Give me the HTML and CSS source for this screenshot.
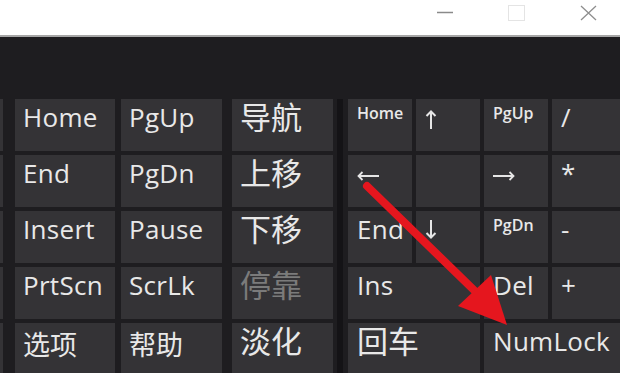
FILE: index.html
```html
<!DOCTYPE html>
<html lang="zh-CN">
<head>
<meta charset="utf-8">
<title>屏幕键盘</title>
<link rel="stylesheet" href="styles.css">
</head>
<body>
<div class="titlebar">
  <svg class="ctl" width="16" height="16" viewBox="0 0 16 16"><line x1="0" y1="7.5" x2="16" y2="7.5" stroke="#8a8a8a" stroke-width="1.5"/></svg>
  <svg class="ctl" width="17" height="16" viewBox="0 0 17 16"><rect x="0.5" y="0.5" width="16" height="15" fill="none" stroke="#e4e4e4" stroke-width="1"/></svg>
  <svg class="ctl" width="17" height="16" viewBox="0 0 17 16"><path d="M1 1 L16 15 M16 1 L1 15" stroke="#8e8e8e" stroke-width="1.3" fill="none"/></svg>
</div>
<div class="board">
  <div class="stub">
    <div class="key"></div><div class="key"></div><div class="key"></div><div class="key"></div><div class="key"></div>
  </div>
  <div class="lgrid">
    <div class="key">Home</div>
    <div class="key">PgUp</div>
    <div class="key c3 cjk">导航</div>
    <div class="key">End</div>
    <div class="key">PgDn</div>
    <div class="key c3 cjk">上移</div>
    <div class="key">Insert</div>
    <div class="key">Pause</div>
    <div class="key c3 cjk">下移</div>
    <div class="key">PrtScn</div>
    <div class="key">ScrLk</div>
    <div class="key c3 cjk off">停靠</div>
    <div class="key cjk-sm">选项</div>
    <div class="key cjk-sm">帮助</div>
    <div class="key c3 cjk">淡化</div>
  </div>
  <div class="sep"></div>
  <div class="rgrid">
    <div class="key sm">Home</div>
    <div class="key"><svg class="ic up" width="12" height="19" viewBox="0 0 12 19"><path d="M6 1.5 V19 M1.5 6 L6 1.5 L10.5 6" stroke="#e6e6e6" stroke-width="2" fill="none"/></svg></div>
    <div class="key sm">PgUp</div>
    <div class="key">/</div>
    <div class="key"><svg class="ic lr" width="22" height="10" viewBox="0 0 22 10"><path d="M1.5 5 H22 M5.5 1 L1.5 5 L5.5 9" stroke="#e6e6e6" stroke-width="1.8" fill="none"/></svg></div>
    <div class="key"></div>
    <div class="key"><svg class="ic lr" width="22" height="10" viewBox="0 0 22 10"><path d="M0 5 H20.5 M16.5 1 L20.5 5 L16.5 9" stroke="#e6e6e6" stroke-width="1.8" fill="none"/></svg></div>
    <div class="key">*</div>
    <div class="key">End</div>
    <div class="key"><svg class="ic down" width="12" height="19" viewBox="0 0 12 19"><path d="M6 0 V17.5 M1.5 13 L6 17.5 L10.5 13" stroke="#e6e6e6" stroke-width="2" fill="none"/></svg></div>
    <div class="key sm">PgDn</div>
    <div class="key">-</div>
    <div class="key span2">Ins</div>
    <div class="key">Del</div>
    <div class="key">+</div>
    <div class="key span2 cjk">回车</div>
    <div class="key span2">NumLock</div>
  </div>
</div>
<svg class="pointer" width="620" height="373" viewBox="0 0 620 373">
  <line x1="367" y1="186" x2="479" y2="295" stroke="#e5161e" stroke-width="8" stroke-linecap="round"/>
  <polygon points="507,325 458,306 491,275" fill="#e5161e"/>
</svg>
</body>
</html>
```

FILE: styles.css
```css
body {
  margin: 0;
  width: 620px;
  height: 373px;
  overflow: hidden;
  position: relative;
  background: #1e1d20;
  font-family: "Open Sans", "Noto Sans CJK SC", sans-serif;
}

.titlebar {
  height: 37px;
  box-sizing: border-box;
  background: #ffffff;
  border-bottom: 2px solid #a6a6a6;
  display: flex;
  justify-content: flex-end;
  align-items: flex-start;
  gap: 55px;
  padding: 5px 23px 0 0;
}

.ctl {
  display: block;
}

.board {
  display: flex;
  align-items: flex-start;
  padding-top: 62px;
}

.board > * {
  flex-shrink: 0;
}

.stub {
  display: grid;
  grid-template-columns: 3px;
  grid-auto-rows: 52px;
  row-gap: 4px;
  margin-right: 12px;
}

.lgrid {
  display: grid;
  grid-template-columns: 100px 101px 105px;
  column-gap: 6px;
  row-gap: 4px;
  grid-auto-rows: 52px;
}

.lgrid .c3 {
  margin-left: 4px;
}

.sep {
  align-self: stretch;
  width: 6px;
  background: #141316;
  margin: 0 5px 0 4px;
}

.rgrid {
  display: grid;
  grid-template-columns: 64px 64px 64px 80px;
  gap: 4px;
  grid-auto-rows: 52px;
}

.key {
  background: #343336;
  color: #e8e8e8;
  font-size: 26px;
  line-height: 26px;
  letter-spacing: 0.3px;
  padding: 5px 0 0 8px;
  box-sizing: border-box;
  white-space: nowrap;
}

.stub .key {
  padding: 0;
}

.rgrid .key {
  padding-left: 9px;
}

.key.sm {
  font-size: 16px;
  line-height: 16px;
  font-weight: 600;
  letter-spacing: 0;
  padding-top: 6px;
}

.key.cjk {
  font-size: 31px;
  line-height: 37px;
  letter-spacing: 0;
  padding-top: 0;
}

.key.cjk-sm {
  font-size: 27px;
  line-height: 33px;
  letter-spacing: 0;
  padding-top: 5px;
}

.key.off {
  color: #7b7b7b;
}

.span2 {
  grid-column: span 2;
}

.ic {
  display: block;
}

.ic.up {
  margin-top: 6px;
}

.ic.lr {
  margin-top: 11px;
}

.ic.down {
  margin-top: 4px;
}

.pointer {
  position: absolute;
  left: 0;
  top: 0;
  pointer-events: none;
}
```
